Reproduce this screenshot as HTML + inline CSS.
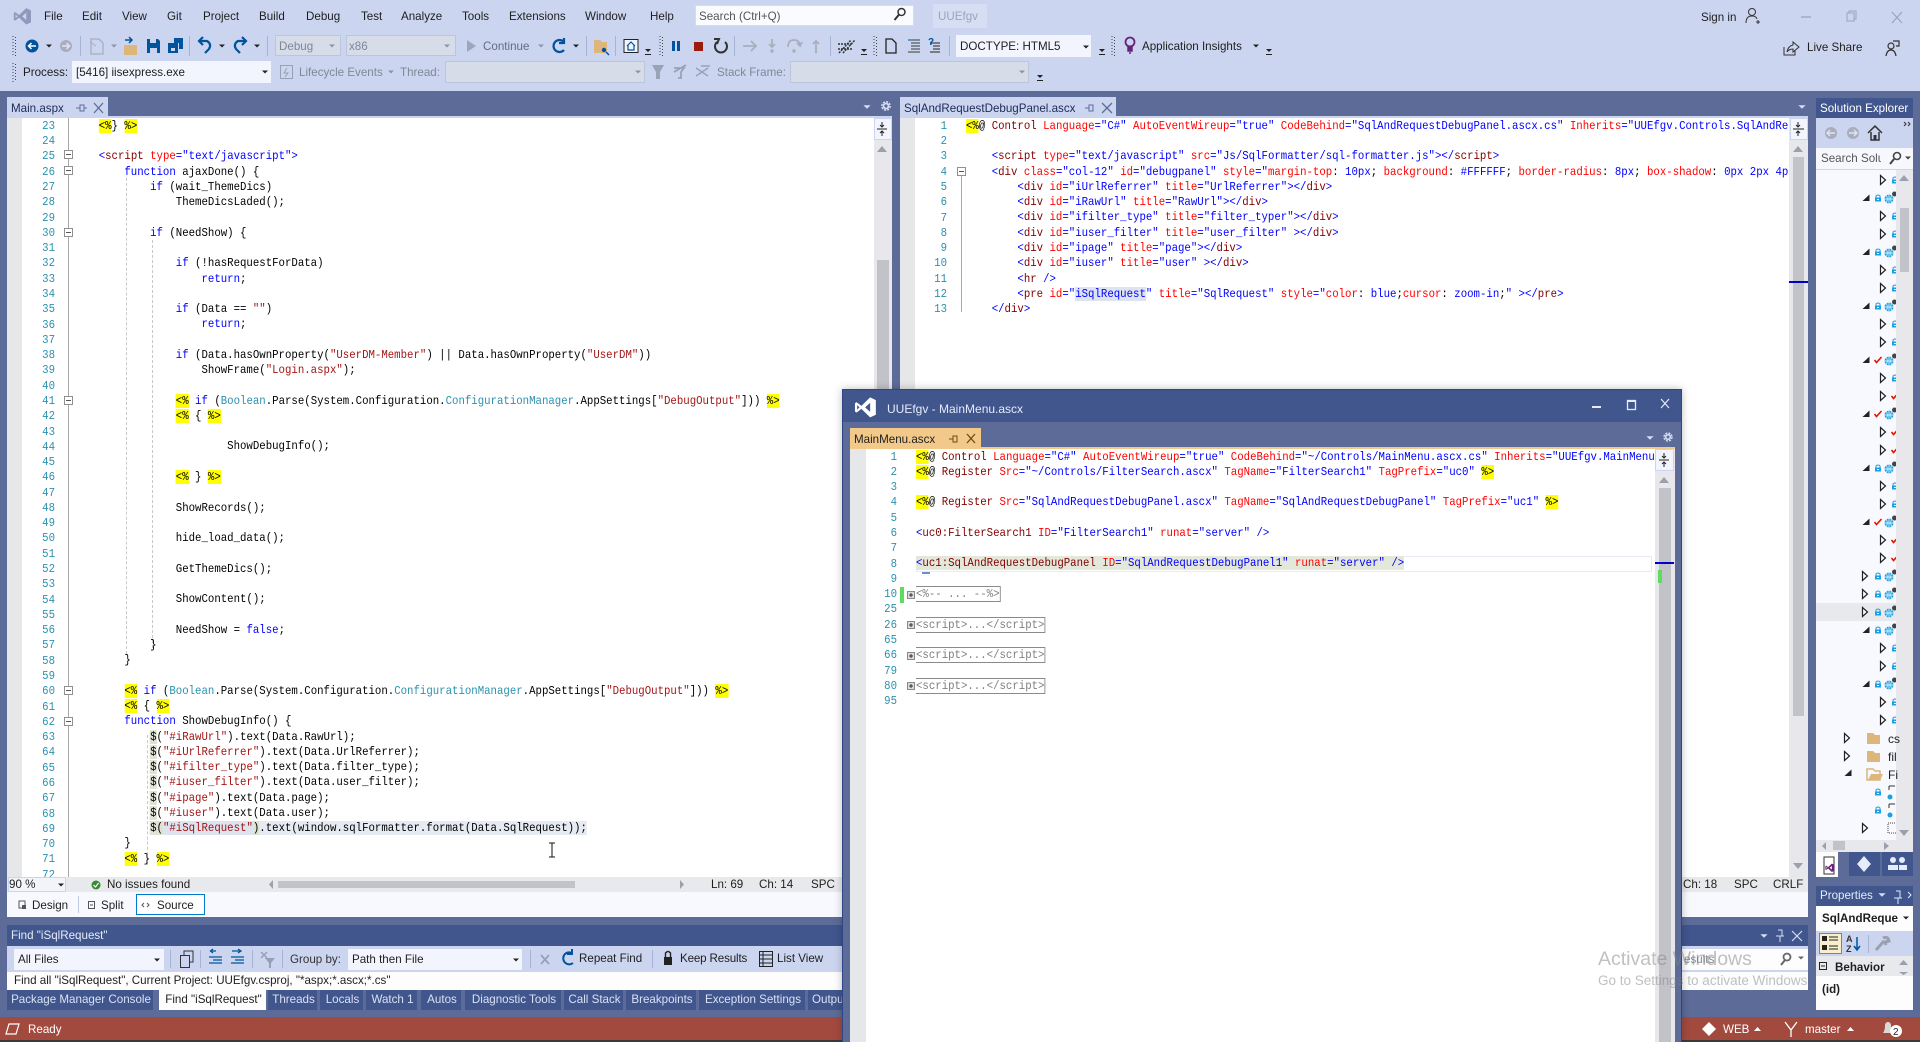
<!DOCTYPE html>
<html lang="en"><head><meta charset="utf-8"><title>UUEfgv - Visual Studio</title>
<style>
html,body{margin:0;padding:0;width:1920px;height:1042px;overflow:hidden;background:#ccd5f0}
body{position:relative;font-family:"Liberation Sans",sans-serif;font-size:12px;color:#1e1e1e}
.a{position:absolute}
.t{position:absolute;white-space:nowrap;line-height:16px;height:16px;font-size:11.6px;margin-top:1px}
.n{margin-top:0}
.g{color:#7f8798}
.w{color:#e6ebfa}
.clip{position:absolute;overflow:hidden}
.code{position:absolute;left:0;top:0;font-family:"Liberation Mono",monospace;font-size:12px;line-height:15.28px;transform:scaleX(.892);transform-origin:0 0;white-space:pre;color:#000}
.code div{height:15.28px}
.num{position:absolute;font-family:"Liberation Mono",monospace;font-size:12px;line-height:15.28px;color:#2b91af;text-align:right;transform:scaleX(.892);transform-origin:100% 0;white-space:pre;width:40px}
.b{color:#00f}.m{color:#800000}.r{color:#f00}.y{background:#ff0}.c{color:#2b91af}.s{color:#a31515}
.x{color:#808080;outline:1px solid #8a8a8a;outline-offset:0}
.tab{position:absolute;top:990px;height:20px;background:#40568d;color:#d9e1f6;font-size:11.6px;line-height:20px;text-align:center;white-space:nowrap;overflow:hidden;text-indent:2px}
svg{position:absolute;left:0;top:0;overflow:visible}
</style></head><body>

<!-- dark bands -->
<div class="a" style="left:0;top:91px;width:1920px;height:926px;background:#5d6b99"></div>

<!-- combos row 2 -->
<div class="a" style="left:275px;top:35px;width:66px;height:21px;background:#d6dce8;border:1px solid #bcc5dc;box-sizing:border-box"></div>
<div class="a" style="left:346px;top:35px;width:110px;height:21px;background:#d6dce8;border:1px solid #bcc5dc;box-sizing:border-box"></div>
<div class="a" style="left:956px;top:35px;width:135px;height:22px;background:#f2f5fd"></div>
<div class="a" style="left:72px;top:61px;width:199px;height:22px;background:#f2f5fd"></div>
<div class="a" style="left:445px;top:61px;width:200px;height:22px;background:#d6dce8;border:1px solid #bcc5dc;box-sizing:border-box"></div>
<div class="a" style="left:790px;top:61px;width:239px;height:22px;background:#d6dce8;border:1px solid #bcc5dc;box-sizing:border-box"></div>
<div class="a" style="left:695px;top:5px;width:219px;height:21px;background:#fafbff;border:1px solid #d5dcf0;box-sizing:border-box"></div>
<div class="a" style="left:933px;top:4px;width:54px;height:24px;background:#d6def4"></div>

<!-- menu -->
<span class="t" style="left:44px;top:8px">File</span>
<span class="t" style="left:82px;top:8px">Edit</span>
<span class="t" style="left:122px;top:8px">View</span>
<span class="t" style="left:167px;top:8px">Git</span>
<span class="t" style="left:203px;top:8px">Project</span>
<span class="t" style="left:259px;top:8px">Build</span>
<span class="t" style="left:306px;top:8px">Debug</span>
<span class="t" style="left:361px;top:8px">Test</span>
<span class="t" style="left:401px;top:8px">Analyze</span>
<span class="t" style="left:462px;top:8px">Tools</span>
<span class="t" style="left:509px;top:8px">Extensions</span>
<span class="t" style="left:585px;top:8px">Window</span>
<span class="t" style="left:650px;top:8px">Help</span>
<span class="t" style="left:699px;top:8px;color:#555">Search (Ctrl+Q)</span>
<span class="t g" style="left:938px;top:8px;color:#9aa3bb">UUEfgv</span>
<span class="t" style="left:1701px;top:9px">Sign in</span>
<span class="t g" style="left:279px;top:38px">Debug</span>
<span class="t g" style="left:349px;top:38px">x86</span>
<span class="t g" style="left:483px;top:38px;color:#646c80">Continue</span>
<span class="t" style="left:960px;top:38px">DOCTYPE: HTML5</span>
<span class="t" style="left:1142px;top:38px">Application Insights</span>
<span class="t n" style="left:1807px;top:40px">Live Share</span>
<span class="t" style="left:23px;top:64px">Process:</span>
<span class="t" style="left:76px;top:64px">[5416] iisexpress.exe</span>
<span class="t g" style="left:299px;top:64px">Lifecycle Events</span>
<span class="t g" style="left:400px;top:64px">Thread:</span>
<span class="t g" style="left:717px;top:64px">Stack Frame:</span>

<!-- LEFT PANE -->
<div class="a" style="left:7px;top:97px;width:101px;height:21px;background:#ccd5f0"></div>
<div class="a" style="left:7px;top:116px;width:885px;height:2px;background:#ccd5f0"></div>
<span class="t" style="left:11px;top:100px;color:#1c2a55">Main.aspx</span>
<div class="a" style="left:7px;top:118px;width:885px;height:759px;background:#fff"></div>
<div class="a" style="left:7px;top:118px;width:15px;height:759px;background:#e6e7e8"></div>
<div class="a" style="left:68px;top:118px;width:1px;height:759px;background:#a8a8a8"></div>
<div class="a" style="left:874px;top:118px;width:18px;height:759px;background:#e8e8ec"></div>
<div class="a" style="left:874px;top:118px;width:18px;height:22px;background:#f2f5fd;border:1px solid #ccd5f0;box-sizing:border-box"></div>
<div class="a" style="left:877px;top:260px;width:12px;height:420px;background:#c2c3c9"></div>
<div class="a" style="left:126px;top:178px;width:0;height:476px;border-left:1px dashed #c8c8c8"></div>
<div class="a" style="left:152px;top:240px;width:0;height:408px;border-left:1px dashed #c8c8c8"></div>
<div class="a" style="left:147px;top:735px;width:0;height:130px;border-left:1px dashed #c8c8c8"></div>

<div class="num" style="left:15px;top:118.9px">23
24
25
26
27
28
29
30
31
32
33
34
35
36
37
38
39
40
41
42
43
44
45
46
47
48
49
50
51
52
53
54
55
56
57
58
59
60
61
62
63
64
65
66
67
68
69
70
71
72</div>
<div class="clip" style="left:73px;top:118px;width:800px;height:759px">
<div class="code" style="top:.9px"><div>    <span class="y">&lt;%</span>} <span class="y">%&gt;</span></div><div></div><div>    <span class="b">&lt;</span><span class="m">script</span> <span class="r">type</span><span class="b">="text/javascript"&gt;</span></div><div>        <span class="b">function</span> ajaxDone() {</div><div>            <span class="b">if</span> (wait_ThemeDics)</div><div>                ThemeDicsLaded();</div><div></div><div>            <span class="b">if</span> (NeedShow) {</div><div></div><div>                <span class="b">if</span> (!hasRequestForData)</div><div>                    <span class="b">return</span>;</div><div></div><div>                <span class="b">if</span> (Data == <span class="s">""</span>)</div><div>                    <span class="b">return</span>;</div><div></div><div>                <span class="b">if</span> (Data.hasOwnProperty(<span class="s">"UserDM-Member"</span>) || Data.hasOwnProperty(<span class="s">"UserDM"</span>))</div><div>                    ShowFrame(<span class="s">"Login.aspx"</span>);</div><div></div><div>                <span class="y">&lt;%</span> <span class="b">if</span> (<span class="c">Boolean</span>.Parse(System.Configuration.<span class="c">ConfigurationManager</span>.AppSettings[<span class="s">"DebugOutput"</span>])) <span class="y">%&gt;</span></div><div>                <span class="y">&lt;%</span> { <span class="y">%&gt;</span></div><div></div><div>                        ShowDebugInfo();</div><div></div><div>                <span class="y">&lt;%</span> } <span class="y">%&gt;</span></div><div></div><div>                ShowRecords();</div><div></div><div>                hide_load_data();</div><div></div><div>                GetThemeDics();</div><div></div><div>                ShowContent();</div><div></div><div>                NeedShow = <span class="b">false</span>;</div><div>            }</div><div>        }</div><div></div><div>        <span class="y">&lt;%</span> <span class="b">if</span> (<span class="c">Boolean</span>.Parse(System.Configuration.<span class="c">ConfigurationManager</span>.AppSettings[<span class="s">"DebugOutput"</span>])) <span class="y">%&gt;</span></div><div>        <span class="y">&lt;%</span> { <span class="y">%&gt;</span></div><div>        <span class="b">function</span> ShowDebugInfo() {</div><div>            <span style="background:#dfe3d4">$</span>(<span class="s">"#iRawUrl"</span>).text(Data.RawUrl);</div><div>            <span style="background:#dfe3d4">$</span>(<span class="s">"#iUrlReferrer"</span>).text(Data.UrlReferrer);</div><div>            <span style="background:#dfe3d4">$</span>(<span class="s">"#ifilter_type"</span>).text(Data.filter_type);</div><div>            <span style="background:#dfe3d4">$</span>(<span class="s">"#iuser_filter"</span>).text(Data.user_filter);</div><div>            <span style="background:#dfe3d4">$</span>(<span class="s">"#ipage"</span>).text(Data.page);</div><div>            <span style="background:#dfe3d4">$</span>(<span class="s">"#iuser"</span>).text(Data.user);</div><div>            <span style="background:#dfe3d4">$(</span><span class="s" style="background:#dde3ef">"#iSqlRequest"</span><span style="background:#dfe3d4">)</span><span style="background:#e6eaf2">.text(window.sqlFormatter.format(Data.SqlRequest));</span></div><div>        }</div><div>        <span class="y">&lt;%</span> } <span class="y">%&gt;</span></div><div></div></div>
</div>

<!-- RIGHT PANE -->
<div class="a" style="left:900px;top:97px;width:216px;height:21px;background:#ccd5f0"></div>
<div class="a" style="left:900px;top:116px;width:908px;height:2px;background:#ccd5f0"></div>
<span class="t" style="left:904px;top:100px;color:#1c2a55">SqlAndRequestDebugPanel.ascx</span>
<div class="a" style="left:900px;top:118px;width:908px;height:799px;background:#fff"></div>
<div class="a" style="left:900px;top:118px;width:15px;height:759px;background:#e6e7e8"></div>
<div class="a" style="left:961px;top:172px;width:1px;height:140px;background:#a8a8a8"></div>
<div class="a" style="left:1789px;top:118px;width:19px;height:759px;background:#e8e8ec"></div>
<div class="a" style="left:1790px;top:118px;width:18px;height:22px;background:#f2f5fd;border:1px solid #ccd5f0;box-sizing:border-box"></div>
<div class="a" style="left:1793px;top:157px;width:11px;height:559px;background:#c2c3c9"></div>
<div class="a" style="left:1789px;top:281px;width:19px;height:2px;background:#0000c8"></div>
<div class="num" style="left:907px;top:118.9px">1
2
3
4
5
6
7
8
9
10
11
12
13</div>
<div class="clip" style="left:966px;top:118px;width:822px;height:300px">
<div class="code" style="top:.9px"><div><span class="y">&lt;%</span><span class="b"></span>@ <span class="m">Control</span> <span class="r">Language</span><span class="b">="C#"</span> <span class="r">AutoEventWireup</span><span class="b">="true"</span> <span class="r">CodeBehind</span><span class="b">="SqlAndRequestDebugPanel.ascx.cs"</span> <span class="r">Inherits</span><span class="b">="UUEfgv.Controls.SqlAndRequestDebugPanel"</span> <span class="y">%&gt;</span></div><div></div><div>    <span class="b">&lt;</span><span class="m">script</span> <span class="r">type</span><span class="b">="text/javascript"</span> <span class="r">src</span><span class="b">="Js/SqlFormatter/sql-formatter.js"&gt;&lt;/</span><span class="m">script</span><span class="b">&gt;</span></div><div>    <span class="b">&lt;</span><span class="m">div</span> <span class="r">class</span><span class="b">="col-12"</span> <span class="r">id</span><span class="b">="debugpanel"</span> <span class="r">style</span><span class="b">="</span><span class="r">margin-top</span>: <span class="b">10px</span>; <span class="r">background</span>: <span class="b">#FFFFFF</span>; <span class="r">border-radius</span>: <span class="b">8px</span>; <span class="r">box-shadow</span>: <span class="b">0px 2px 4px rgba(0,0,0,.2)"&gt;</span></div><div>        <span class="b">&lt;</span><span class="m">div</span> <span class="r">id</span><span class="b">="iUrlReferrer"</span> <span class="r">title</span><span class="b">="UrlReferrer"&gt;&lt;/</span><span class="m">div</span><span class="b">&gt;</span></div><div>        <span class="b">&lt;</span><span class="m">div</span> <span class="r">id</span><span class="b">="iRawUrl"</span> <span class="r">title</span><span class="b">="RawUrl"&gt;&lt;/</span><span class="m">div</span><span class="b">&gt;</span></div><div>        <span class="b">&lt;</span><span class="m">div</span> <span class="r">id</span><span class="b">="ifilter_type"</span> <span class="r">title</span><span class="b">="filter_typer"&gt;&lt;/</span><span class="m">div</span><span class="b">&gt;</span></div><div>        <span class="b">&lt;</span><span class="m">div</span> <span class="r">id</span><span class="b">="iuser_filter"</span> <span class="r">title</span><span class="b">="user_filter" &gt;&lt;/</span><span class="m">div</span><span class="b">&gt;</span></div><div>        <span class="b">&lt;</span><span class="m">div</span> <span class="r">id</span><span class="b">="ipage"</span> <span class="r">title</span><span class="b">="page"&gt;&lt;/</span><span class="m">div</span><span class="b">&gt;</span></div><div>        <span class="b">&lt;</span><span class="m">div</span> <span class="r">id</span><span class="b">="iuser"</span> <span class="r">title</span><span class="b">="user" &gt;&lt;/</span><span class="m">div</span><span class="b">&gt;</span></div><div>        <span class="b">&lt;</span><span class="m">hr</span> <span class="b">/&gt;</span></div><div>        <span class="b">&lt;</span><span class="m">pre</span> <span class="r">id</span><span class="b">="<span style="background:#dde3ef">iSqlRequest</span>"</span> <span class="r">title</span><span class="b">="SqlRequest"</span> <span class="r">style</span><span class="b">="</span><span class="r">color</span>: <span class="b">blue</span>;<span class="r">cursor</span>: <span class="b">zoom-in</span>;<span class="b">" &gt;&lt;/</span><span class="m">pre</span><span class="b">&gt;</span></div><div>    <span class="b">&lt;/</span><span class="m">div</span><span class="b">&gt;</span></div></div>
</div>

<!-- editor status bars -->
<div class="a" style="left:7px;top:877px;width:885px;height:15px;background:#e8e9ec"></div>
<div class="a" style="left:900px;top:877px;width:908px;height:15px;background:#e8e9ec"></div>
<div class="a" style="left:8px;top:877px;width:58px;height:15px;background:#f2f4fa;border:1px solid #ccd5f0;box-sizing:border-box"></div>
<span class="t" style="left:9px;top:876px">90 %</span>
<span class="t" style="left:107px;top:876px">No issues found</span>
<div class="a" style="left:278px;top:881px;width:297px;height:7px;background:#c2c3c9"></div>
<span class="t" style="left:711px;top:876px">Ln: 69</span>
<span class="t" style="left:759px;top:876px">Ch: 14</span>
<span class="t" style="left:811px;top:876px">SPC</span>
<span class="t" style="left:1683px;top:876px">Ch: 18</span>
<span class="t" style="left:1734px;top:876px">SPC</span>
<span class="t" style="left:1773px;top:876px">CRLF</span>
<div class="a" style="left:7px;top:892px;width:885px;height:25px;background:#f7f9fe"></div>
<div class="a" style="left:900px;top:892px;width:908px;height:25px;background:#f7f9fe"></div>
<div class="a" style="left:136px;top:894px;width:69px;height:21px;border:1px solid #007acc;box-sizing:border-box;background:#fff"></div>
<span class="t" style="left:32px;top:897px">Design</span>
<span class="t" style="left:101px;top:897px">Split</span>
<span class="t" style="left:157px;top:897px">Source</span>
<div class="a" style="left:78px;top:896px;width:1px;height:17px;background:#c3cbe0"></div>

<!-- FIND PANEL -->
<div class="a" style="left:7px;top:925px;width:1801px;height:21px;background:#40568d"></div>
<span class="t w n" style="left:11px;top:928px">Find "iSqlRequest"</span>
<div class="a" style="left:7px;top:946px;width:1801px;height:26px;background:#ccd5f0"></div>
<div class="a" style="left:14px;top:949px;width:150px;height:21px;background:#f2f5fd"></div>
<span class="t n" style="left:18px;top:952px">All Files</span>
<span class="t n" style="left:290px;top:952px;color:#333">Group by:</span>
<div class="a" style="left:348px;top:949px;width:174px;height:21px;background:#f2f5fd"></div>
<span class="t n" style="left:352px;top:952px">Path then File</span>
<span class="t n" style="left:579px;top:951px">Repeat Find</span>
<span class="t n" style="left:680px;top:951px;letter-spacing:-.15px">Keep Results</span>
<span class="t n" style="left:777px;top:951px">List View</span>
<div class="a" style="left:7px;top:972px;width:1801px;height:18px;background:#fdfdfe"></div>
<span class="t n" style="left:14px;top:973px">Find all "iSqlRequest", Current Project: UUEfgv.csproj, "*aspx;*.ascx;*.cs"</span>
<div class="a" style="left:1682px;top:949px;width:126px;height:21px;background:#fdfdfe"></div>
<span class="t g n" style="left:1684px;top:952px">esults</span>

<div class="tab" style="left:7px;width:146px">Package Manager Console</div>
<div class="tab" style="left:159px;width:107px;background:#fdfdfe;color:#1e1e1e">Find "iSqlRequest"</div>
<div class="tab" style="left:268px;width:49px">Threads</div>
<div class="tab" style="left:320px;width:43px">Locals</div>
<div class="tab" style="left:366px;width:51px">Watch 1</div>
<div class="tab" style="left:421px;width:40px">Autos</div>
<div class="tab" style="left:465px;width:96px">Diagnostic Tools</div>
<div class="tab" style="left:564px;width:59px">Call Stack</div>
<div class="tab" style="left:626px;width:70px">Breakpoints</div>
<div class="tab" style="left:699px;width:106px">Exception Settings</div>
<div class="tab" style="left:808px;width:40px;text-align:left;padding-left:2px">Output</div>

<!-- status bar -->
<div class="a" style="left:0;top:1017px;width:1920px;height:23px;background:#a34a3f"></div>
<div class="a" style="left:0;top:1040px;width:1920px;height:2px;background:#3a3a3a"></div>
<span class="t" style="left:28px;top:1021px;color:#fff">Ready</span>
<span class="t" style="left:1723px;top:1021px;color:#fff">WEB</span>
<span class="t" style="left:1805px;top:1021px;color:#fff">master</span>

<!-- SOLUTION EXPLORER -->
<div class="a" style="left:1816px;top:98px;width:97px;height:20px;background:#40568d"></div>
<span class="t w" style="left:1820px;top:100px;color:#fff">Solution Explorer</span>
<div class="a" style="left:1816px;top:118px;width:97px;height:30px;background:#ccd5f0"></div>
<div class="a" style="left:1816px;top:148px;width:97px;height:22px;background:#f7f8fd;border-bottom:1px solid #ccd5f0;box-sizing:border-box"></div>
<span class="t n" style="left:1821px;top:151px;color:#555;width:60px;overflow:hidden">Search Solu</span>
<div class="a" style="left:1816px;top:170px;width:97px;height:682px;background:#f7f9fe"></div>
<div class="a" style="left:1816px;top:603px;width:80px;height:18px;background:#e8e9ec"></div>
<div class="a" style="left:1896px;top:170px;width:17px;height:670px;background:#e8e8ec"></div>
<div class="a" style="left:1900px;top:208px;width:9px;height:64px;background:#c2c3c9"></div>
<div class="a" style="left:1816px;top:840px;width:97px;height:12px;background:#e8e8ec"></div>
<div class="a" style="left:1833px;top:841px;width:12px;height:9px;background:#c2c3c9"></div>
<div class="a" style="left:1816px;top:852px;width:97px;height:25px;background:#5d6b99"></div>
<div class="a" style="left:1816px;top:852px;width:22px;height:25px;background:#fdfdfe"></div>
<div class="a" style="left:1849px;top:852px;width:31px;height:24px;background:#40568d"></div>
<div class="a" style="left:1882px;top:852px;width:31px;height:24px;background:#40568d"></div>
<span class="t n" style="left:1888px;top:731px;font-size:12px">cs</span>
<span class="t n" style="left:1888px;top:749px;font-size:12px">fil</span>
<span class="t n" style="left:1888px;top:767px;font-size:12px">Fi</span>

<!-- PROPERTIES -->
<div class="a" style="left:1816px;top:886px;width:97px;height:20px;background:#40568d"></div>
<span class="t n" style="left:1820px;top:888px;color:#e6ebfa">Properties</span>
<div class="a" style="left:1816px;top:906px;width:97px;height:25px;background:#fdfdfe"></div>
<span class="t" style="left:1822px;top:910px;font-weight:bold;width:76px;overflow:hidden">SqlAndReque:</span>
<div class="a" style="left:1816px;top:931px;width:97px;height:25px;background:#ccd5f0"></div>
<div class="a" style="left:1819px;top:933px;width:23px;height:21px;background:#f8eecb;border:1px solid #a08040;box-sizing:border-box"></div>
<div class="a" style="left:1816px;top:956px;width:97px;height:20px;background:#e8e9ec"></div>
<span class="t" style="left:1835px;top:959px;font-weight:bold">Behavior</span>
<div class="a" style="left:1816px;top:976px;width:97px;height:34px;background:#fdfdfe"></div>
<span class="t n" style="left:1822px;top:982px;font-weight:bold">(id)</span>

<!-- base icons -->
<svg width="1920" height="1042" viewBox="0 0 1920 1042">
<defs>
<path id="dd" d="M-3-1.5H3L0 1.5Z"/>
<path id="ddl" d="M-3-3H3L0 0ZM-3 2H3V3H-3Z"/>
<path id="to" d="M-2.500-4.500L2.500 0L-2.500 4.500Z" fill="#fff" stroke="#222" stroke-width="1.200"/>
<path id="tf" d="M3.500-3.500V3H-3.500Z" fill="#222"/>
<g id="lk"><path d="M-3-.5H3V3.500H-3Z" fill="#1ba1e2"/><path d="M-2-.5V-2Q0-4 2-2V-.5" fill="none" stroke="#1ba1e2"/><rect x="-1" y="1" width="2" height="1" fill="#fff"/></g>
<g id="gl"><circle r="4.500" fill="#1ba1e2"/><path d="M-4.500 0H4.500M0-4.500V4.500M-2.500-3.500Q-1 0-2.500 3.500M2.500-3.500Q1 0 2.500 3.500" stroke="#fff" stroke-width=".7" fill="none"/><circle cx="5.500" cy="-5" r="2.500" fill="#444"/></g>
<path id="ck" d="M-3.500 0L-1.500 2.500L3.500-3" fill="none" stroke="#e51400" stroke-width="1.600"/>
<path id="vs" d="M17 1.500L23 4.300V19.700L17 22.500L7.800 13.600L2.800 17.400L1 16.500V7.500L2.800 6.600L7.800 10.400ZM17 7.300L11.700 12L17 16.700ZM3.300 9.600V14.400L5.800 12Z" fill-rule="evenodd"/>
</defs>
<use href="#vs" transform="translate(13 7) scale(.78)" fill="#8e99bc"/>
<!-- search magnifier -->
<path d="M894.500 20L899.500 14" stroke="#333" stroke-width="2"/><circle cx="901.500" cy="12" r="3.500" fill="none" stroke="#333" stroke-width="1.500"/>
<!-- person -->
<circle cx="1752" cy="12" r="3.500" fill="none" stroke="#333"/><path d="M1746 23Q1746 16 1752 16Q1756 16 1757 19M1756 22H1760M1758 20V24" fill="none" stroke="#333"/>
<!-- win ctrl -->
<path d="M1801 17H1811" stroke="#9aa3bb" stroke-width="1.300"/><path d="M1847 13H1854V21H1847ZM1849 13V11H1856V19H1854" fill="none" stroke="#9aa3bb"/><path d="M1892 12L1902 23M1902 12L1892 23" stroke="#9aa3bb" stroke-width="1.200"/>
<!-- grips -->
<g stroke="#444" stroke-width="1" stroke-dasharray="1 2" fill="none"><path d="M13 36V56M15.500 37V56M13 63V82M15.500 64V82M660 36V56M662.500 37V56M874 36V56M876.500 37V56M1112 36V56M1114.500 37V56"/></g>
<!-- separators -->
<g stroke="#a7b3d3"><path d="M80.500 36V56M189.500 36V56M267.500 36V56M586.500 36V56M615.500 36V56M734.500 36V56M830.500 36V56M949.500 36V56M170.500 950V968M200.500 950V968M252.500 950V968M282.500 950V968M530.500 950V968M652.500 950V968M1868.500 935V953"/></g>
<!-- back/forward -->
<circle cx="32" cy="46" r="6.500" fill="#00539c"/><path d="M36 46H29M31.500 43L28.500 46L31.500 49" stroke="#fff" stroke-width="1.500" fill="none"/>
<circle cx="66" cy="46" r="6" fill="#a9aebd"/><path d="M62 46H69M66.500 43L69.500 46L66.500 49" stroke="#dfe4f4" stroke-width="1.500" fill="none"/>
<g fill="#222"><use href="#dd" x="49" y="46"/><use href="#dd" x="222" y="46"/><use href="#dd" x="257" y="46"/><use href="#dd" x="576" y="46"/><use href="#dd" x="265" y="72"/><use href="#dd" x="1086" y="47"/><use href="#dd" x="1256" y="46"/><use href="#dd" x="157" y="960"/><use href="#dd" x="516" y="960"/><use href="#dd" x="61" y="885"/>
<use href="#ddl" x="648" y="52"/><use href="#ddl" x="864" y="52"/><use href="#ddl" x="1102" y="52"/><use href="#ddl" x="1269" y="52"/><use href="#ddl" x="1040" y="78"/></g>
<g fill="#8d94a8"><use href="#dd" x="114" y="46"/><use href="#dd" x="541" y="46"/><use href="#dd" x="332" y="46"/><use href="#dd" x="447" y="46"/><use href="#dd" x="391" y="72"/><use href="#dd" x="638" y="72"/><use href="#dd" x="1022" y="72"/></g>
<!-- new project -->
<path d="M91 39H99L103 43V54H91Z" fill="none" stroke="#a9aebd" stroke-width="1.300"/><path d="M90 42L96 46" stroke="#a9aebd"/>
<!-- open -->
<path d="M124 45H137V55H124Z" fill="#dcb67a"/><path d="M125 40H131M129 37L132 40L129 43" stroke="#00539c" stroke-width="1.500" fill="none"/>
<!-- save -->
<path d="M147 39H158L160 41V53H147Z" fill="#00539c"/><rect x="150" y="39" width="6" height="4" fill="#ccd5f0"/><rect x="150" y="48" width="7" height="5" fill="#ccd5f0"/>
<path d="M168 43H178V53H168Z" fill="#00539c"/><path d="M174 38H183V49H179V43H174Z" fill="#00539c"/><rect x="171" y="48" width="4" height="3" fill="#ccd5f0"/>
<!-- undo/redo -->
<path d="M200 41H207Q212 44 209 49L205 53M203 37L199 41L203 45" fill="none" stroke="#00539c" stroke-width="2.200"/>
<path d="M245 41H238Q233 44 236 49L240 53M242 37L246 41L242 45" fill="none" stroke="#00539c" stroke-width="2.200"/>
<!-- play -->
<path d="M467 40L476 46L467 52Z" fill="#9ea6ba"/>
<!-- restart -->
<path d="M564 42A6 6 0 1 0 564 50M564 38V43H559" fill="none" stroke="#00539c" stroke-width="2.200"/>
<!-- find folder -->
<path d="M594 40H600L602 42H607V53H594Z" fill="#dcb67a"/><circle cx="604" cy="50" r="2.200" fill="#00539c"/><path d="M606 52L609 55" stroke="#00539c" stroke-width="1.400"/>
<!-- home -->
<rect x="624" y="39.500" width="14" height="13" fill="#f2f5fd" stroke="#222"/><path d="M627 46L631 42L635 46M628 45V50H634V45" fill="none" stroke="#00539c" stroke-width="1.200"/>
<!-- pause stop restart -->
<path d="M672 41H675V51H672ZM677 41H680V51H677Z" fill="#00539c"/><rect x="694" y="42" width="9" height="9" fill="#9c1b0f"/>
<path d="M725 42A6 6 0 1 1 717 42M714 39L719 39L717 44" fill="none" stroke="#333" stroke-width="2"/>
<!-- step icons -->
<g fill="none" stroke="#a9aebd" stroke-width="1.800"><path d="M743 46H756M751 41L756 46L751 51"/><path d="M772 39V46M769 44L772 47L775 44"/><path d="M788 47Q788 40 794 40Q799 40 800 45M797 43L800 46L802 42"/><path d="M816 52V41M813 44L816 41L819 44"/></g>
<g fill="#a9aebd"><circle cx="772" cy="51" r="1.700"/><circle cx="794" cy="51" r="1.700"/><circle cx="816" cy="52" r="1.200"/></g>
<!-- breakpoint hatch -->
<path d="M839 53L851 40M843 53L855 40M838 44H852M838 49H852" stroke="#333" stroke-width="1.500" stroke-dasharray="2 1"/>
<!-- doc/list -->
<path d="M886 39H892L896 43V53H886Z" fill="#ccd5f0" stroke="#222" stroke-width="1.300"/>
<path d="M908 40H920M911 43H920M911 46H920M911 49H920M908 52H920" stroke="#3a3a3a"/><path d="M908 40H914" stroke="#00539c"/>
<path d="M930 43H940M933 46H940M933 49H940M930 52H940" stroke="#222"/><text x="928" y="45" font-size="10" font-weight="bold" fill="#00539c" font-family="Liberation Sans">?</text>
<!-- bulb -->
<circle cx="1130" cy="42" r="4.500" fill="none" stroke="#68217a" stroke-width="1.800"/><path d="M1128 47H1132V51H1128ZM1129 53H1131" stroke="#68217a" stroke-width="1.500" fill="#68217a"/>
<!-- live share -->
<path d="M1784 47V55H1795V50M1787 52Q1788 46 1793 45V42L1799 47L1793 52V49Q1789 49 1787 52Z" fill="none" stroke="#333"/>
<!-- feedback -->
<circle cx="1891" cy="46" r="3" fill="none" stroke="#333" stroke-width="1.200"/><path d="M1886 56Q1887 50 1891 50Q1895 50 1896 56M1893 41H1899V46H1896" fill="none" stroke="#333" stroke-width="1.200"/>
<!-- lifecycle etc -->
<rect x="280.500" y="65.500" width="12" height="13" fill="none" stroke="#98a0b4"/><path d="M287 68L284 73H288L285 77" stroke="#98a0b4" fill="none"/>
<path d="M652 65H664L660 72V79H656V72Z" fill="#9aa2b6"/><path d="M674 72L686 65M674 68H684L681 72V78H678" fill="none" stroke="#9aa2b6" stroke-width="1.800"/><path d="M696 68L708 76M696 76L708 68M701 66H710" fill="none" stroke="#9aa2b6" stroke-width="1.500"/>
<!-- tab pins & close -->
<g stroke="#5d6b99" fill="none"><path d="M76 108H80V105H84V111H80V108M84 108H87"/><path d="M94 103L103 113M103 103L94 113" stroke-width="1.300"/><path d="M1085 108H1089V105H1093V111H1089V108"/><path d="M1102 103L1112 113M1112 103L1102 113" stroke-width="1.300"/></g>
<g fill="#d6def4"><use href="#dd" transform="translate(867 107) scale(1.200)"/><use href="#dd" transform="translate(1802 107) scale(1.200)"/><use href="#dd" transform="translate(1764 936) scale(1.200)"/><use href="#dd" transform="translate(1882 895) scale(1.200)"/></g>
<circle cx="886" cy="106" r="2.500" fill="none" stroke="#d6def4" stroke-width="1.800"/><circle cx="886" cy="106" r="4.200" fill="none" stroke="#d6def4" stroke-width="1.500" stroke-dasharray="2 1.300"/>
<!-- scroll arrows -->
<g fill="#9aa0ae"><path d="M877 152H887L882 146Z"/><path d="M1793 152H1803L1798 146Z"/><path d="M1793 863H1803L1798 869Z"/><path d="M1899 181H1909L1904 175Z"/><path d="M1899 830H1909L1904 836Z"/><path d="M273 880V889L269 884.500Z"/><path d="M680 880V889L684 884.500Z"/><path d="M1826 842V850L1822 846Z"/><path d="M1884 842V850L1889 846Z"/></g>
<!-- split buttons -->
<path d="M877 129H887M882 122V127M880 125L882 127L884 125M882 136V131M880 133L882 131L884 133M1793 129H1804M1798 122V127M1796 125L1798 127L1800 125M1798 136V131M1796 133L1798 131L1800 133" stroke="#222" fill="none"/>
<!-- fold boxes -->
<g fill="#fff" stroke="#909090"><rect x="64.500" y="150.500" width="8" height="8"/><rect x="64.500" y="166.500" width="8" height="8"/><rect x="64.500" y="228.500" width="8" height="8"/><rect x="64.500" y="396.500" width="8" height="8"/><rect x="64.500" y="686.500" width="8" height="8"/><rect x="64.500" y="717.500" width="8" height="8"/><rect x="957.500" y="167.500" width="8" height="8"/></g>
<path d="M66 154.500H71M66 170.500H71M66 232.500H71M66 400.500H71M66 690.500H71M66 721.500H71M959 171.500H964" stroke="#555"/>
<!-- status icons -->
<circle cx="96" cy="885" r="4.500" fill="#388a34"/><path d="M93.500 885L95.500 887L98.500 883" stroke="#fff" fill="none" stroke-width="1.200"/>
<rect x="19" y="901" width="6" height="7" fill="none" stroke="#555"/><rect x="22" y="905" width="4" height="4" fill="#555"/><rect x="88.500" y="901.500" width="6" height="7" fill="none" stroke="#555"/><path d="M90 905H93" stroke="#555"/><path d="M144 903L142 905L144 907M147 903L149 905L147 907" stroke="#555" fill="none"/>
<!-- find toolbar icons -->
<rect x="180.500" y="955.500" width="9" height="12" fill="none" stroke="#333"/><path d="M184 955V951H193V962H190" fill="none" stroke="#333"/>
<path d="M209 957H222M213 960H222M209 963H222M216 951H211M213 949L210.500 951L213 953" stroke="#00539c" stroke-width="1.300" fill="none"/><path d="M231 957H244M235 960H244M231 963H244M232 951H240M238 949L241 951L238 953" stroke="#00539c" stroke-width="1.300" fill="none"/>
<path d="M261 952L267 958M267 952L261 958" stroke="#98a0b4" stroke-width="1.500"/><path d="M265 958H275L271 963V968H269V963Z" fill="#98a0b4"/>
<path d="M541 955L549 964M549 955L541 964" stroke="#98a0b4" stroke-width="1.700"/>
<path d="M572 953A6 6 0 1 0 573 963M572 949V954H567" fill="none" stroke="#00539c" stroke-width="2"/>
<rect x="664" y="957" width="8" height="8" fill="#222"/><path d="M665.500 957V953Q668 950 670.500 953V957" fill="none" stroke="#222" stroke-width="1.400"/>
<rect x="759.500" y="951.500" width="13" height="15" fill="none" stroke="#222"/><path d="M760 955H772M760 959H772M760 963H772M763 952V966" stroke="#222"/>
<!-- right find toolbar -->
<circle cx="1787" cy="957" r="3.500" fill="none" stroke="#666" stroke-width="1.800"/><path d="M1785 960L1781 965" stroke="#666" stroke-width="2"/><use href="#dd" x="1801" y="958" fill="#666"/>
<path d="M1776 936H1784M1778 930H1782V936M1780 936V942" stroke="#d6def4" fill="none"/><path d="M1792 931L1802 941M1802 931L1792 941" stroke="#d6def4" stroke-width="1.200"/>
<!-- SE toolbar -->
<circle cx="1831" cy="133" r="6" fill="#a9aebd"/><path d="M1835 133H1828M1830 130L1827 133L1830 136" stroke="#dfe4f4" stroke-width="1.400" fill="none"/>
<circle cx="1853" cy="133" r="6" fill="#a9aebd"/><path d="M1849 133H1856M1854 130L1857 133L1854 136" stroke="#dfe4f4" stroke-width="1.400" fill="none"/>
<path d="M1868 133L1875 126L1882 133M1871 132V140H1879V132" fill="none" stroke="#333" stroke-width="1.500"/><rect x="1873.500" y="135" width="3" height="5" fill="#333"/>
<path d="M1904 122L1906 124L1904 126M1908 122L1910 124L1908 126" stroke="#333" fill="none"/>
<circle cx="1897" cy="156" r="3.500" fill="none" stroke="#444" stroke-width="1.600"/><path d="M1894 159L1890 164" stroke="#444" stroke-width="2"/><use href="#dd" x="1908" y="158" fill="#444"/>
<!-- SE tree -->
<svg x="1816" y="170" width="80" height="670" viewBox="1816 170 80 670" style="overflow:hidden">
<g>
<use href="#to" x="1883" y="180"/><use href="#lk" x="1895" y="180"/>
<use href="#tf" x="1866" y="198"/><use href="#lk" x="1878" y="198"/><use href="#gl" x="1889" y="199"/><use href="#to" x="1883" y="216"/><use href="#lk" x="1895" y="216"/><use href="#to" x="1883" y="234"/><use href="#lk" x="1895" y="234"/>
<use href="#tf" x="1866" y="252"/><use href="#lk" x="1878" y="252"/><use href="#gl" x="1889" y="253"/><use href="#to" x="1883" y="270"/><use href="#lk" x="1895" y="270"/><use href="#to" x="1883" y="288"/><use href="#lk" x="1895" y="288"/>
<use href="#tf" x="1866" y="306"/><use href="#lk" x="1878" y="306"/><use href="#gl" x="1889" y="307"/><use href="#to" x="1883" y="324"/><use href="#lk" x="1895" y="324"/><use href="#to" x="1883" y="342"/><use href="#lk" x="1895" y="342"/>
<use href="#tf" x="1866" y="360"/><use href="#ck" x="1878" y="360"/><use href="#gl" x="1889" y="361"/><use href="#to" x="1883" y="378"/><use href="#lk" x="1895" y="378"/><use href="#to" x="1883" y="396"/><use href="#ck" x="1895" y="396"/>
<use href="#tf" x="1866" y="414"/><use href="#ck" x="1878" y="414"/><use href="#gl" x="1889" y="415"/><use href="#to" x="1883" y="432"/><use href="#ck" x="1895" y="432"/><use href="#to" x="1883" y="450"/><use href="#ck" x="1895" y="450"/>
<use href="#tf" x="1866" y="468"/><use href="#lk" x="1878" y="468"/><use href="#gl" x="1889" y="469"/><use href="#to" x="1883" y="486"/><use href="#lk" x="1895" y="486"/><use href="#to" x="1883" y="504"/><use href="#lk" x="1895" y="504"/>
<use href="#tf" x="1866" y="522"/><use href="#ck" x="1878" y="522"/><use href="#gl" x="1889" y="523"/><use href="#to" x="1883" y="540"/><use href="#ck" x="1895" y="540"/><use href="#to" x="1883" y="558"/><use href="#ck" x="1895" y="558"/>
<use href="#to" x="1865" y="576"/><use href="#lk" x="1878" y="576"/><use href="#gl" x="1889" y="577"/>
<use href="#to" x="1865" y="594"/><use href="#lk" x="1878" y="594"/><use href="#gl" x="1889" y="595"/>
<use href="#to" x="1865" y="612"/><use href="#lk" x="1878" y="612"/><use href="#gl" x="1889" y="613"/>
<use href="#tf" x="1866" y="630"/><use href="#lk" x="1878" y="630"/><use href="#gl" x="1889" y="631"/><use href="#to" x="1883" y="648"/><use href="#lk" x="1895" y="648"/><use href="#to" x="1883" y="666"/><use href="#lk" x="1895" y="666"/>
<use href="#tf" x="1866" y="684"/><use href="#lk" x="1878" y="684"/><use href="#gl" x="1889" y="685"/><use href="#to" x="1883" y="702"/><use href="#lk" x="1895" y="702"/><use href="#to" x="1883" y="720"/><use href="#lk" x="1895" y="720"/>
<use href="#to" x="1847" y="738"/><path d="M1867 733H1873L1875 735H1880V744H1867Z" fill="#dcb67a"/>
<use href="#to" x="1847" y="756"/><path d="M1867 751H1873L1875 753H1880V762H1867Z" fill="#dcb67a"/>
<use href="#tf" x="1848" y="773"/><path d="M1867 769H1873L1875 771H1880V780H1867Z" fill="none" stroke="#dcb67a" stroke-width="1.500"/><path d="M1868 780L1871 774H1883L1880 780Z" fill="#dcb67a"/>
<use href="#lk" x="1878" y="792"/><path d="M1889 786V790M1889 786H1895" stroke="#333"/><circle cx="1890" cy="797" r="2.500" fill="#1ba1e2"/>
<use href="#lk" x="1878" y="810"/><path d="M1889 804V808M1889 804H1895" stroke="#333"/><circle cx="1890" cy="815" r="2.500" fill="#1ba1e2"/>
<use href="#to" x="1865" y="828"/><rect x="1888" y="823" width="9" height="10" fill="none" stroke="#444" stroke-dasharray="1 1"/>
</g></svg>
<!-- SE tabs icons -->
<path d="M1824 857H1834V874H1824Z" fill="#fff" stroke="#333"/><use href="#vs" transform="translate(1825 863) scale(.4)" fill="#68217a"/>
<path d="M1864 856L1871 864L1864 872L1857 864Z" fill="#e6ebfa"/>
<circle cx="1893" cy="860" r="3" fill="#e6ebfa"/><circle cx="1902" cy="860" r="3" fill="#e6ebfa"/><path d="M1888 870V865H1898V870ZM1899 870V865H1907V870Z" fill="#e6ebfa"/>
<!-- properties -->
<g stroke="#e6ebfa" fill="none"><path d="M1896 891H1900V898M1898 898V904M1894 898H1902"/><path d="M1908 892L1911 895L1908 898"/></g>
<use href="#dd" x="1906" y="918" fill="#222"/>
<rect x="1822" y="936" width="5" height="5" fill="#222"/><rect x="1822" y="945" width="5" height="5" fill="#222"/><path d="M1829 937H1838M1829 940H1838M1829 946H1838M1829 949H1838" stroke="#222"/>
<text x="1846" y="942" font-size="9" font-weight="bold" fill="#333" font-family="Liberation Sans">A</text><text x="1846" y="952" font-size="9" font-weight="bold" fill="#333" font-family="Liberation Sans">Z</text><path d="M1857 937V950M1854 946L1857 950L1860 946" stroke="#00539c" stroke-width="1.500" fill="none"/>
<path d="M1876 950L1884 941M1883 938Q1888 936 1889 941L1885 942L1886 945" stroke="#9aa0ae" stroke-width="3" fill="none"/>
<rect x="1819.500" y="962.500" width="7" height="7" fill="none" stroke="#222"/><path d="M1821 966H1825" stroke="#222"/>
<path d="M1899 965H1908L1903.500 960Z" fill="#9aa0ae"/><path d="M1899 972H1908L1903.500 975Z" fill="#9aa0ae"/>
<!-- status icons -->
<path d="M9 1024H19L16 1034H6Z" fill="none" stroke="#fff" stroke-width="1.200"/>
<path d="M1709 1022L1716 1029L1709 1036L1702 1029Z" fill="#fff"/>
<path d="M1754 1031L1757.500 1027L1761 1031Z" fill="#fff"/><path d="M1847 1031L1850.500 1027L1854 1031Z" fill="#fff"/>
<path d="M1785 1022L1791 1030L1797 1022M1791 1030V1037" fill="none" stroke="#fff" stroke-width="1.300"/>
<path d="M1883 1033Q1885 1030 1885 1026Q1885 1022 1888 1022Q1891 1022 1891 1026Q1891 1030 1893 1033Z" fill="#d9d9d9"/><circle cx="1896" cy="1031" r="6" fill="#fff"/><text x="1893" y="1035" font-size="10" fill="#222" font-family="Liberation Sans">2</text>
<!-- cursor -->
<path d="M549 843H555M549 857H555M552 843V857" stroke="#111" fill="none"/>
</svg>

<!-- FLOAT WINDOW -->
<div class="a" style="left:842px;top:389px;width:840px;height:653px;background:#5d6b99;border:1px solid #2f4585;border-bottom:0;box-sizing:border-box;box-shadow:0 0 8px rgba(0,0,0,.25)"></div>
<div class="a" style="left:843px;top:390px;width:838px;height:32px;background:#40568d"></div>
<span class="t n" style="left:887px;top:401px;color:#e6ebfa;font-size:12px">UUEfgv - MainMenu.ascx</span>
<div class="a" style="left:850px;top:428px;width:131px;height:21px;background:#f3c98a"></div>
<span class="t" style="left:854px;top:431px;color:#1e1e1e">MainMenu.ascx</span>
<div class="a" style="left:850px;top:447px;width:825px;height:2px;background:#f3c98a"></div>
<div class="a" style="left:850px;top:449px;width:825px;height:593px;background:#fff"></div>
<div class="a" style="left:850px;top:449px;width:16px;height:593px;background:#e6e7e8"></div>
<div class="a" style="left:1655px;top:449px;width:20px;height:593px;background:#e8e8ec"></div>
<div class="a" style="left:1655px;top:449px;width:19px;height:22px;background:#f2f5fd;border:1px solid #ccd5f0;box-sizing:border-box"></div>
<div class="a" style="left:1659px;top:488px;width:12px;height:554px;background:#c2c3c9"></div>
<div class="a" style="left:1655px;top:562px;width:19px;height:2px;background:#0000c8"></div>
<div class="a" style="left:1658px;top:570px;width:4px;height:13px;background:#5fdc5f"></div>
<div class="a" style="left:916px;top:556px;width:736px;height:16px;border:1px solid #eaeaf2;box-sizing:border-box"></div>
<div class="a" style="left:900px;top:587px;width:4px;height:16px;background:#5fdc5f"></div>
<div class="a" style="left:922px;top:572px;width:8px;height:2px;background:#6f8fd0"></div>

<div class="num" style="left:857px;top:449.6px">1
2
3
4
5
6
7
8
9
10
25
26
65
66
79
80
95</div>
<div class="clip" style="left:916px;top:449px;width:739px;height:300px">
<div class="code" style="top:.6px"><div><span class="y">&lt;%</span>@ <span class="m">Control</span> <span class="r">Language</span><span class="b">="C#"</span> <span class="r">AutoEventWireup</span><span class="b">="true"</span> <span class="r">CodeBehind</span><span class="b">="~/Controls/MainMenu.ascx.cs"</span> <span class="r">Inherits</span><span class="b">="UUEfgv.MainMenu"</span> <span class="y">%&gt;</span></div><div><span class="y">&lt;%</span>@ <span class="m">Register</span> <span class="r">Src</span><span class="b">="~/Controls/FilterSearch.ascx"</span> <span class="r">TagName</span><span class="b">="FilterSearch1"</span> <span class="r">TagPrefix</span><span class="b">="uc0"</span> <span class="y">%&gt;</span></div><div></div><div><span class="y">&lt;%</span>@ <span class="m">Register</span> <span class="r">Src</span><span class="b">="SqlAndRequestDebugPanel.ascx"</span> <span class="r">TagName</span><span class="b">="SqlAndRequestDebugPanel"</span> <span class="r">TagPrefix</span><span class="b">="uc1"</span> <span class="y">%&gt;</span></div><div></div><div><span class="b">&lt;</span><span class="m">uc0:FilterSearch1</span> <span class="r">ID</span><span class="b">="FilterSearch1"</span> <span class="r">runat</span><span class="b">="server"</span> <span class="b">/&gt;</span></div><div></div><div><span style="background:#e4e8da"><span class="b">&lt;</span><span class="m">uc1:SqlAndRequestDebugPanel</span> <span class="r">ID</span><span class="b">="SqlAndRequestDebugPanel1"</span> <span class="r">runat</span><span class="b">="server"</span> <span class="b">/&gt;</span></span></div><div></div><div><span class="x">&lt;%-- ... --%&gt;</span></div><div></div><div><span class="x">&lt;script&gt;...&lt;/script&gt;</span></div><div></div><div><span class="x">&lt;script&gt;...&lt;/script&gt;</span></div><div></div><div><span class="x">&lt;script&gt;...&lt;/script&gt;</span></div><div></div></div>
</div>

<svg width="1920" height="1042" viewBox="0 0 1920 1042">
<use href="#vs" transform="translate(854 396) scale(.95)" fill="#fff"/>
<path d="M1592 407H1601" stroke="#e6ebfa" stroke-width="2"/><rect x="1627.500" y="400.500" width="8" height="9" fill="none" stroke="#e6ebfa" stroke-width="1.300"/><path d="M1627 401H1636" stroke="#e6ebfa" stroke-width="2"/><path d="M1661 399L1669 408M1669 399L1661 408" stroke="#e6ebfa" stroke-width="1.200"/>
<path d="M949 439H953V436H957V442H953V439" stroke="#6b4a10" fill="none"/><path d="M967 434L975 443M975 434L967 443" stroke="#6b4a10" stroke-width="1.300"/>
<use href="#dd" transform="translate(1650 438) scale(1.200)" fill="#d6def4"/><circle cx="1668" cy="437" r="2.300" fill="none" stroke="#d6def4" stroke-width="1.600"/><circle cx="1668" cy="437" r="4" fill="none" stroke="#d6def4" stroke-width="1.400" stroke-dasharray="2 1.200"/>
<path d="M1659 460H1669M1664 453V458M1662 456L1664 458L1666 456M1664 467V462M1662 464L1664 462L1666 464" stroke="#222" fill="none"/>
<path d="M1659 483H1669L1664 477Z" fill="#9aa0ae"/>
<g fill="#dcdcdc" stroke="#8a8a8a"><rect x="907.500" y="591.500" width="7" height="7"/><rect x="907.500" y="621.500" width="7" height="7"/><rect x="907.500" y="652.500" width="7" height="7"/><rect x="907.500" y="682.500" width="7" height="7"/></g>
<path d="M909 595H913M911 593V597M909 625H913M911 623V627M909 656H913M911 654V658M909 686H913M911 684V688" stroke="#333"/>
</svg>

<!-- watermark -->
<div class="t n" style="left:1598px;top:947px;height:24px;line-height:24px;font-size:19.500px;color:rgba(130,130,130,.5)">Activate Windows</div>
<div class="t n" style="left:1598px;top:973px;font-size:13.500px;color:rgba(130,130,130,.5)">Go to Settings to activate Windows.</div>
</body></html>
